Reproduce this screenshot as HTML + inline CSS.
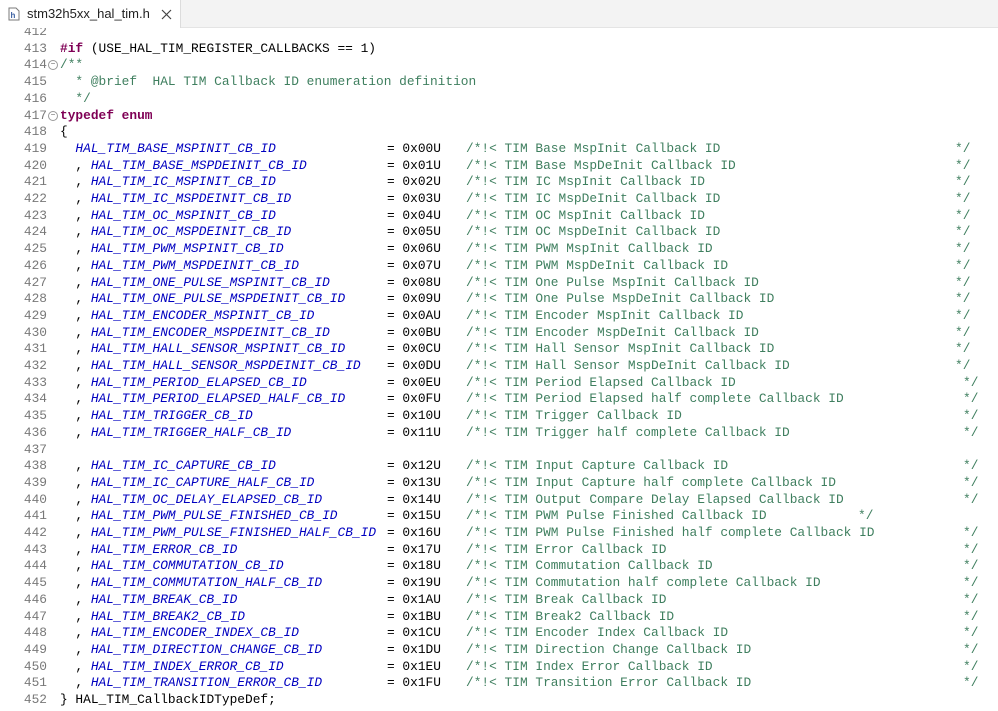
<!DOCTYPE html>
<html><head><meta charset="utf-8"><style>
body{margin:0;width:998px;height:711px;overflow:hidden;background:#fff;font-family:"Liberation Mono",monospace;}
.tabs{position:absolute;left:0;top:0;width:998px;height:27px;background:#f3f3f3;border-bottom:1px solid #e4e4e4;}
.tab{position:absolute;left:0;top:0;width:180px;height:28px;background:#fff;border-right:1px solid #dcdcdc;font-family:"Liberation Sans",sans-serif;font-size:13px;color:#222;}
.ed{position:absolute;left:0;top:28px;width:998px;height:683px;overflow:hidden;}
.l{position:absolute;left:0;height:17px;width:998px;font-size:12.85px;line-height:17px;white-space:pre;}
.n{position:absolute;left:0;width:47px;text-align:right;color:#787878;}
.c{position:absolute;left:60px;}
.s{position:absolute;}
.k{color:#7f0055;font-weight:bold}
.e{color:#0000c0;font-style:italic}
.g{color:#3f7f5f}
.f{position:absolute;left:48px;top:4px;width:8px;height:8px;border:1px solid #999;border-radius:50%;font-size:8px;line-height:8px;text-align:center;color:#666}
</style></head><body>
<div class="tabs"><div class="tab">
<svg style="position:absolute;left:8px;top:7px" width="12" height="14"><path d="M1 1h7l3 3v9H1z" fill="#fff" stroke="#7a7a7a"/><text x="2.5" y="11" font-size="8" font-family="Liberation Sans" fill="#3a5fa0" font-weight="bold">h</text></svg>
<span style="position:absolute;left:27px;top:6px">stm32h5xx_hal_tim.h</span>
<svg style="position:absolute;left:161px;top:9px" width="11" height="11"><path d="M1 1L10 10M10 1L1 10" stroke="#444" stroke-width="1.2"/></svg>
</div></div>
<div class="ed" id="ed"></div>
<script>
var rows=[
["412",""],
["413",'<span class="k">#if</span> (USE_HAL_TIM_REGISTER_CALLBACKS == 1)'],
["414",'<span class="g">/**</span>',1],
["415",'<span class="g">  * @brief  HAL TIM Callback ID enumeration definition</span>'],
["416",'<span class="g">  */</span>'],
["417",'<span class="k">typedef enum</span>',1],
["418","{"]];
var E=[
["  ","HAL_TIM_BASE_MSPINIT_CB_ID","0x00U","TIM Base MspInit Callback ID",955],
[", ","HAL_TIM_BASE_MSPDEINIT_CB_ID","0x01U","TIM Base MspDeInit Callback ID",955],
[", ","HAL_TIM_IC_MSPINIT_CB_ID","0x02U","TIM IC MspInit Callback ID",955],
[", ","HAL_TIM_IC_MSPDEINIT_CB_ID","0x03U","TIM IC MspDeInit Callback ID",955],
[", ","HAL_TIM_OC_MSPINIT_CB_ID","0x04U","TIM OC MspInit Callback ID",955],
[", ","HAL_TIM_OC_MSPDEINIT_CB_ID","0x05U","TIM OC MspDeInit Callback ID",955],
[", ","HAL_TIM_PWM_MSPINIT_CB_ID","0x06U","TIM PWM MspInit Callback ID",955],
[", ","HAL_TIM_PWM_MSPDEINIT_CB_ID","0x07U","TIM PWM MspDeInit Callback ID",955],
[", ","HAL_TIM_ONE_PULSE_MSPINIT_CB_ID","0x08U","TIM One Pulse MspInit Callback ID",955],
[", ","HAL_TIM_ONE_PULSE_MSPDEINIT_CB_ID","0x09U","TIM One Pulse MspDeInit Callback ID",955],
[", ","HAL_TIM_ENCODER_MSPINIT_CB_ID","0x0AU","TIM Encoder MspInit Callback ID",955],
[", ","HAL_TIM_ENCODER_MSPDEINIT_CB_ID","0x0BU","TIM Encoder MspDeInit Callback ID",955],
[", ","HAL_TIM_HALL_SENSOR_MSPINIT_CB_ID","0x0CU","TIM Hall Sensor MspInit Callback ID",955],
[", ","HAL_TIM_HALL_SENSOR_MSPDEINIT_CB_ID","0x0DU","TIM Hall Sensor MspDeInit Callback ID",955],
[", ","HAL_TIM_PERIOD_ELAPSED_CB_ID","0x0EU","TIM Period Elapsed Callback ID",963],
[", ","HAL_TIM_PERIOD_ELAPSED_HALF_CB_ID","0x0FU","TIM Period Elapsed half complete Callback ID",963],
[", ","HAL_TIM_TRIGGER_CB_ID","0x10U","TIM Trigger Callback ID",963],
[", ","HAL_TIM_TRIGGER_HALF_CB_ID","0x11U","TIM Trigger half complete Callback ID",963],
null,
[", ","HAL_TIM_IC_CAPTURE_CB_ID","0x12U","TIM Input Capture Callback ID",963],
[", ","HAL_TIM_IC_CAPTURE_HALF_CB_ID","0x13U","TIM Input Capture half complete Callback ID",963],
[", ","HAL_TIM_OC_DELAY_ELAPSED_CB_ID","0x14U","TIM Output Compare Delay Elapsed Callback ID",963],
[", ","HAL_TIM_PWM_PULSE_FINISHED_CB_ID","0x15U","TIM PWM Pulse Finished Callback ID",858],
[", ","HAL_TIM_PWM_PULSE_FINISHED_HALF_CB_ID","0x16U","TIM PWM Pulse Finished half complete Callback ID",963],
[", ","HAL_TIM_ERROR_CB_ID","0x17U","TIM Error Callback ID",963],
[", ","HAL_TIM_COMMUTATION_CB_ID","0x18U","TIM Commutation Callback ID",963],
[", ","HAL_TIM_COMMUTATION_HALF_CB_ID","0x19U","TIM Commutation half complete Callback ID",963],
[", ","HAL_TIM_BREAK_CB_ID","0x1AU","TIM Break Callback ID",963],
[", ","HAL_TIM_BREAK2_CB_ID","0x1BU","TIM Break2 Callback ID",963],
[", ","HAL_TIM_ENCODER_INDEX_CB_ID","0x1CU","TIM Encoder Index Callback ID",963],
[", ","HAL_TIM_DIRECTION_CHANGE_CB_ID","0x1DU","TIM Direction Change Callback ID",963],
[", ","HAL_TIM_INDEX_ERROR_CB_ID","0x1EU","TIM Index Error Callback ID",963],
[", ","HAL_TIM_TRANSITION_ERROR_CB_ID","0x1FU","TIM Transition Error Callback ID",963]];
var h="",y=-5,LH=16.7,num=412;
function line(n,code,fold,extra){h+='<div class="l" style="top:'+y.toFixed(1)+'px"><span class="n">'+n+'</span>'+(fold?'<span class="f">&#8722;</span>':'')+'<span class="c">'+code+'</span>'+(extra||'')+'</div>';y+=LH;}
rows.forEach(function(r){line(r[0],r[1],r[2]);num++;});
E.forEach(function(e){
 if(!e){line(num,"");num++;return;}
 var ex='<span class="s" style="left:387px">= '+e[2]+'</span><span class="s g" style="left:466px">/*!&lt; '+e[3]+'</span><span class="s g" style="left:'+e[4]+'px">*/</span>';
 line(num,'  '+(e[0]==", "?', ':'')+'<span class="e">'+e[1]+'</span>',0,ex);num++;});
line(num,'} HAL_TIM_CallbackIDTypeDef;');num++;
line(num,'');
document.getElementById('ed').innerHTML=h;
</script>
</body></html>
